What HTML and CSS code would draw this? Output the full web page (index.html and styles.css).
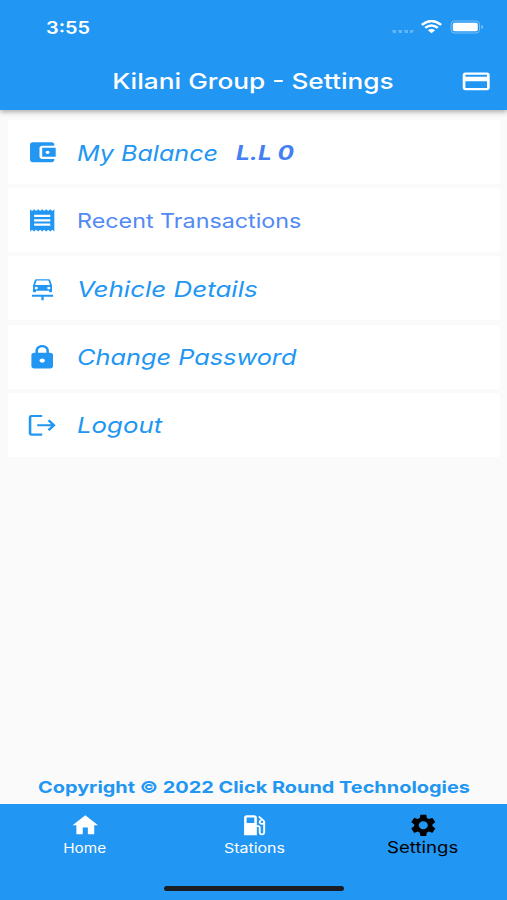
FILE: index.html
```html
<!DOCTYPE html>
<html lang="en">
<head>
    <meta charset="UTF-8">
    <meta name="viewport" content="width=device-width, initial-scale=1.0">
    <title>Kilani Group - Settings</title>
    <link rel="stylesheet" href="styles.css">
</head>
<body>
    <header class="app-header">
        <div class="status-bar">
            <span class="time">3:55</span>
            <svg class="signal" viewBox="0 0 24 6"><path d="M1 2h4v3H2zM7 2h4v3H8zM13 2h4v3h-3zM19 2h4l-2 3h-2z"/></svg>
            <svg class="wifi" viewBox="0 0 20 14" preserveAspectRatio="none">
                <path d="M.8 5Q10-3 19.200 5M4 8.200Q10 3 16 8.200"/>
                <path class="dot" d="M6.600 10.600Q10 7.900 13.400 10.600L10 13.800z"/>
            </svg>
            <svg class="battery" viewBox="0 0 34 14">
                <rect class="case" x="1" y="1" width="28.5" height="12" rx="3.5"/>
                <rect x="2.8" y="2.7" width="25" height="8.6" rx="1.8"/>
                <path class="tip" d="M31.3 5q2 .8 2 2t-2 2z"/>
            </svg>
        </div>
        <div class="title-bar">
            <h1><span>Kilani Group - Settings</span></h1>
            <svg class="icon card-icon" viewBox="0 0 24 24" preserveAspectRatio="none"><path d="M20 4H4c-1.11 0-1.99.89-1.99 2L2 18c0 1.11.89 2 2 2h16c1.11 0 2-.89 2-2V6c0-1.11-.89-2-2-2zm0 14H4v-6h16v6zm0-10H4V6h16v2z"/></svg>
        </div>
    </header>

    <main class="settings">
        <ul class="menu">
            <li class="menu-item">
                <svg class="icon" viewBox="0 0 24 24" preserveAspectRatio="none"><path d="M21 18v1c0 1.100-.9 2-2 2H5c-1.110 0-2-.9-2-2V5c0-1.100.890-2 2-2h14c1.100 0 2 .9 2 2v1h-9c-1.110 0-2 .9-2 2v8c0 1.100.890 2 2 2h9zm-9-2h10V8H12v8zm4-2.500c-.830 0-1.500-.670-1.500-1.500s.670-1.500 1.500-1.500 1.500.670 1.500 1.500-.670 1.500-1.500 1.500z"/></svg>
                <span class="label balance">My Balance</span>
                <span class="amount">L.L 0</span>
            </li>
            <li class="menu-item">
                <svg class="icon" viewBox="0 0 24 24" preserveAspectRatio="none"><path d="M18 17H6v-2h12v2zm0-4H6v-2h12v2zm0-4H6V7h12v2zM3 22l1.500-1.500L6 22l1.500-1.500L9 22l1.500-1.500L12 22l1.500-1.500L15 22l1.500-1.500L18 22l1.500-1.500L21 22V2l-1.500 1.500L18 2l-1.500 1.500L15 2l-1.500 1.500L12 2l-1.500 1.500L9 2 7.500 3.500 6 2 4.500 3.500 3 2v20z"/></svg>
                <span class="label recent">Recent Transactions</span>
            </li>
            <li class="menu-item">
                <svg class="icon" viewBox="0 0 24 24" preserveAspectRatio="none"><path fill-rule="evenodd" d="M6.600 3.700Q6.800 2.900 7.700 2.900h9.100q.9 0 1.100.8L19.300 8.500v5.400q0 .8-.8.8h-.6q-.8 0-.8-.8v-.5H7.400v.5q0 .8-.8.8H6q-.8 0-.8-.8V8.500zM7.900 4L6.700 8.200h11.100L16.600 4zM7.600 9.700a1.200 1.200 0 1 0 0 2.400 1.200 1.200 0 0 0 0-2.400zm9.300 0a1.200 1.200 0 1 0 0 2.400 1.200 1.200 0 0 0 0-2.400zM4.400 17h15.700v1.800h-7v3.100h-1.700v-3.100h-7z"/></svg>
                <span class="label vehicle">Vehicle Details</span>
            </li>
            <li class="menu-item">
                <svg class="icon" viewBox="0 0 24 24" preserveAspectRatio="none"><path d="M18 8h-1V6c0-2.760-2.240-5-5-5S7 3.240 7 6v2H6c-1.100 0-2 .9-2 2v10c0 1.100.9 2 2 2h12c1.100 0 2-.9 2-2V10c0-1.100-.9-2-2-2zm-6 9c-1.100 0-2-.9-2-2s.9-2 2-2 2 .9 2 2-.9 2-2 2zm3.100-9H8.900V6c0-1.710 1.390-3.100 3.100-3.100s3.100 1.390 3.100 3.100v2z"/></svg>
                <span class="label password">Change Password</span>
            </li>
            <li class="menu-item">
                <svg class="icon outline" viewBox="0 0 24 24" preserveAspectRatio="none"><path d="M12 3.600H4.200Q3 3.600 3 4.900v14.200q0 1.300 1.200 1.300H12M8.300 12h12M16.700 7.500l4 4.500-4 4.500"/></svg>
                <span class="label logout">Logout</span>
            </li>
        </ul>
        <p class="copyright"><span>Copyright © 2022 Click Round Technologies</span></p>
    </main>

    <nav class="bottom-nav">
        <div class="tabs">
            <a class="tab">
                <svg class="icon" viewBox="0 0 24 24" preserveAspectRatio="none"><path d="M10 20v-6h4v6h5v-8h3L12 3 2 12h3v8z"/></svg>
                <span class="home">Home</span>
            </a>
            <a class="tab">
                <svg class="icon" viewBox="0 0 24 24" preserveAspectRatio="none"><path d="M19.770 7.230l.010-.010-3.720-3.720L15 4.560l2.110 2.110c-.940.360-1.610 1.260-1.610 2.330 0 1.380 1.120 2.500 2.500 2.500.360 0 .690-.080 1-.210v7.210c0 .550-.450 1-1 1s-1-.450-1-1V14c0-1.100-.9-2-2-2h-1V5c0-1.100-.9-2-2-2H6c-1.100 0-2 .9-2 2v16h10v-7.500h1.500v5c0 1.380 1.120 2.500 2.500 2.500s2.500-1.120 2.500-2.500V9c0-.690-.280-1.320-.730-1.770zM12 10H6V5h6v5zm6 0c-.550 0-1-.450-1-1s.450-1 1-1 1 .450 1 1-.450 1-1 1z"/></svg>
                <span class="stations">Stations</span>
            </a>
            <a class="tab active">
                <svg class="icon" viewBox="0 0 24 24" preserveAspectRatio="none"><path d="M19.140 12.940c.040-.3.060-.610.060-.940 0-.320-.020-.640-.070-.940l2.030-1.580c.180-.140.230-.410.120-.610l-1.920-3.320c-.120-.220-.370-.290-.590-.220l-2.390.960c-.5-.380-1.030-.7-1.620-.940l-.360-2.540c-.040-.240-.240-.410-.480-.410h-3.840c-.240 0-.430.170-.470.410l-.360 2.540c-.590.240-1.130.570-1.620.940l-2.390-.960c-.220-.080-.470 0-.590.220L2.740 8.870c-.120.210-.080.470.120.610l2.030 1.580c-.050.3-.090.630-.090.940s.020.640.070.940l-2.030 1.580c-.180.140-.230.410-.120.610l1.920 3.320c.120.220.370.290.590.220l2.390-.960c.5.380 1.030.7 1.620.940l.360 2.540c.050.240.240.410.480.410h3.840c.240 0 .440-.170.470-.410l.360-2.540c.590-.240 1.130-.560 1.620-.940l2.390.960c.220.080.470 0 .590-.220l1.920-3.320c.120-.220.070-.470-.120-.610l-2.010-1.580zM12 15.600c-1.980 0-3.600-1.620-3.600-3.600s1.620-3.600 3.600-3.600 3.600 1.620 3.600 3.600-1.620 3.600-3.600 3.600z"/></svg>
                <span class="current">Settings</span>
            </a>
        </div>
        <div class="home-indicator"></div>
    </nav>
</body>
</html>
```
FILE: styles.css
```css
* {
    box-sizing: border-box;
}

body {
    margin: 0;
    width: 507px;
    height: 900px;
    display: flex;
    flex-direction: column;
    overflow: hidden;
    background: #fafafa;
    font-family: Inter, "Liberation Sans", sans-serif;
    color: #2196f3;
}

svg {
    display: block;
    flex: none;
    fill: currentColor;
}

.icon {
    width: 32.4px;
    height: 26.6px;
}

/* wide lettering */
span {
    display: inline-block;
    white-space: nowrap;
    transform: scaleX(1.2);
}

.app-header {
    height: 110px;
    flex: none;
    background: #2196f3;
    color: #fff;
    box-shadow: 0 2px 5px rgba(0, 0, 0, 0.32);
    z-index: 1;
}

.status-bar {
    height: 54px;
    padding: 0 24px 0 46px;
    display: flex;
    align-items: center;
}

.time {
    margin-right: auto;
    padding-top: 2px;
    font-size: 17px;
    font-weight: 600;
    transform: scaleX(1.17);
    transform-origin: left;
}

.signal {
    width: 24px;
    height: 6px;
    margin: 8px 6px 0 0;
    opacity: 0.3;
}

.wifi {
    width: 21px;
    height: 13.5px;
    margin-right: 7px;
}

.wifi path {
    fill: none;
    stroke: currentColor;
    stroke-width: 2.5;
}

.wifi .dot {
    fill: currentColor;
    stroke: none;
}

.battery {
    width: 34px;
    height: 14px;
    position: relative;
    left: 1px;
}

.battery .case {
    fill: none;
    stroke: #fff;
    stroke-opacity: 0.4;
}

.battery .tip {
    opacity: 0.45;
}

.title-bar {
    height: 54px;
    display: flex;
    align-items: center;
    padding: 0 15px 0 47px;
}

h1 {
    flex: 1;
    margin: 0;
    text-align: center;
    font-size: 22px;
    font-weight: 550;
}

h1 span {
    transform: scaleX(1.193);
}

.settings {
    flex: 1;
    display: flex;
    flex-direction: column;
    justify-content: space-between;
    padding: 10px 7px 7px 8px;
}

.menu {
    list-style: none;
    margin: 0;
    padding: 0;
    display: grid;
    gap: 4.2px;
}

.menu-item {
    height: 64px;
    display: flex;
    align-items: center;
    padding: 1px 0 0 18px;
    background: #fff;
}

.label {
    margin-left: 19px;
    font-size: 21.5px;
    font-style: italic;
    transform-origin: left;
}

.balance {
    transform: scaleX(1.168);
}

.recent {
    font-size: 20px;
    font-style: normal;
    color: #5189f5;
    transform: scaleX(1.165);
}

.vehicle {
    transform: scaleX(1.207);
}

.password {
    transform: scaleX(1.177);
}

.amount {
    margin-left: 38px;
    padding-top: 1px;
    font-size: 20px;
    font-style: italic;
    font-weight: 700;
    color: #447ff3;
    transform: scaleX(1.22);
    transform-origin: left;
}

.outline {
    fill: none;
    stroke: currentColor;
    stroke-width: 1.9;
}

.copyright {
    margin: 0;
    text-align: center;
    font-size: 16.6px;
    line-height: 20px;
    font-weight: 700;
}

.bottom-nav {
    height: 96px;
    flex: none;
    display: flex;
    flex-direction: column;
    align-items: center;
    justify-content: space-between;
    padding-bottom: 9px;
    background: #2196f3;
    color: #fff;
}

.tabs {
    width: 100%;
    display: grid;
    grid-template-columns: repeat(3, 1fr);
}

.tab {
    display: flex;
    flex-direction: column;
    align-items: center;
    padding: 8px 0 0 1px;
    font-size: 13.3px;
    line-height: 18px;
}

.tab .icon {
    width: 30.6px;
}

.home {
    transform: scaleX(1.15);
}

.active {
    color: #000;
    font-size: 15.5px;
    line-height: 17px;
}

.home-indicator {
    width: 180px;
    height: 5.5px;
    border-radius: 3px;
    background: #1b1d24;
}
```
